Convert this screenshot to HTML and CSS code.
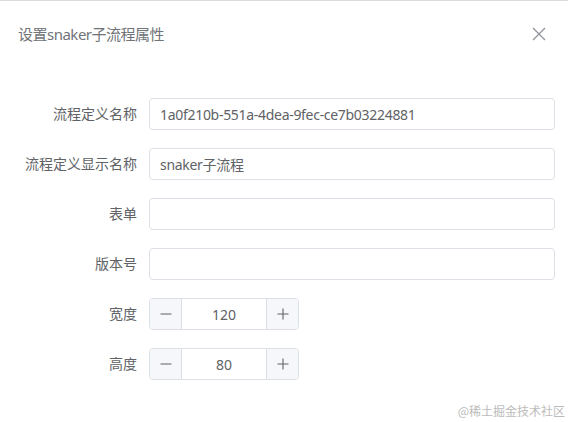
FILE: index.html
```html
<!DOCTYPE html>
<html lang="zh-CN">
  <head>
    <meta charset="UTF-8" />
    <meta name="viewport" content="width=device-width, initial-scale=1.0" />
    <title>设置snaker子流程属性</title>
    <link rel="stylesheet" href="styles.css">
  </head>
  <body>
    <div class="dialog">
      <!-- header -->
      <div class="dialog-header">
        <span class="dialog-title">设置snaker子流程属性</span>
        <button class="dialog-close" aria-label="关闭">
          <svg viewBox="0 0 14 14" width="14" height="14">
            <path d="M1 1 L13 13 M13 1 L1 13" stroke="#909399" stroke-width="1.3" fill="none" />
          </svg>
        </button>
      </div>

      <!-- form -->
      <form class="dialog-body">
        <div class="form-item">
          <label class="form-label">流程定义名称</label>
          <div class="form-content">
            <input class="input" type="text" value="1a0f210b-551a-4dea-9fec-ce7b03224881" />
          </div>
        </div>
        <div class="form-item">
          <label class="form-label">流程定义显示名称</label>
          <div class="form-content">
            <input class="input" type="text" value="snaker子流程" />
          </div>
        </div>
        <div class="form-item">
          <label class="form-label">表单</label>
          <div class="form-content">
            <input class="input" type="text" value="" />
          </div>
        </div>
        <div class="form-item">
          <label class="form-label">版本号</label>
          <div class="form-content">
            <input class="input" type="text" value="" />
          </div>
        </div>
        <div class="form-item">
          <label class="form-label">宽度</label>
          <div class="form-content">
            <div class="input-number">
              <span class="num-btn num-decrease">
                <svg viewBox="0 0 14 14" width="14" height="14"><path d="M1.5 7 H12.5" stroke="#606266" stroke-width="1.1" /></svg>
              </span>
              <input class="num-value" type="text" value="120" />
              <span class="num-btn num-increase">
                <svg viewBox="0 0 14 14" width="14" height="14"><path d="M1.5 7 H12.5 M7 1.5 V12.5" stroke="#606266" stroke-width="1.1" /></svg>
              </span>
            </div>
          </div>
        </div>
        <div class="form-item">
          <label class="form-label">高度</label>
          <div class="form-content">
            <div class="input-number">
              <span class="num-btn num-decrease">
                <svg viewBox="0 0 14 14" width="14" height="14"><path d="M1.5 7 H12.5" stroke="#606266" stroke-width="1.1" /></svg>
              </span>
              <input class="num-value" type="text" value="80" />
              <span class="num-btn num-increase">
                <svg viewBox="0 0 14 14" width="14" height="14"><path d="M1.5 7 H12.5 M7 1.5 V12.5" stroke="#606266" stroke-width="1.1" /></svg>
              </span>
            </div>
          </div>
        </div>
      </form>

      <div class="watermark">@稀土掘金技术社区</div>
    </div>
  </body>
</html>
```

FILE: styles.css
```css
* {
  box-sizing: border-box;
}
body {
  margin: 0;
  background-color: #fff;
  font-family: 'Noto Sans', 'Noto Sans CJK SC', sans-serif;
  color: #606266;
}
.dialog {
  position: relative;
  height: 422px;
  border-top: 1px solid #dcdcdc;
  background-color: #fff;
}
.dialog-header {
  display: flex;
  align-items: center;
  justify-content: space-between;
  padding: 21px 22px 10px 18px;
}
.dialog-title {
  font-size: 15px;
  line-height: 24px;
  letter-spacing: -0.5px;
  color: #707378;
}
.dialog-close {
  display: flex;
  padding: 0;
  border: none;
  background: none;
  cursor: pointer;
}
.dialog-body {
  margin: 0;
  padding: 42px 13px 0 0;
}
.form-item {
  display: flex;
  align-items: center;
  margin-bottom: 18px;
}
.form-label {
  width: 149px;
  flex-shrink: 0;
  padding-right: 12px;
  text-align: right;
  font-size: 14px;
  line-height: 32px;
  color: #606266;
}
.form-content {
  flex: 1;
}
.input {
  display: block;
  width: 100%;
  height: 32px;
  padding: 0 10px;
  border: 1px solid #dcdfe6;
  border-radius: 4px;
  font-family: inherit;
  font-size: 14px;
  letter-spacing: -0.3px;
  color: #606266;
  outline: none;
}
.input-number {
  display: flex;
  width: 150px;
  height: 32px;
  border: 1px solid #dcdfe6;
  border-radius: 4px;
  overflow: hidden;
}
.num-btn {
  display: flex;
  align-items: center;
  justify-content: center;
  width: 32px;
  flex-shrink: 0;
  background-color: #f5f7fa;
}
.num-decrease {
  border-right: 1px solid #dcdfe6;
}
.num-increase {
  border-left: 1px solid #dcdfe6;
}
.num-value {
  flex: 1;
  min-width: 0;
  border: none;
  padding: 0;
  text-align: center;
  font-family: inherit;
  font-size: 14px;
  color: #606266;
  outline: none;
}
.watermark {
  position: absolute;
  right: 3px;
  bottom: 3px;
  font-size: 12px;
  color: #bbbbbb;
  font-family: 'Noto Sans CJK SC', sans-serif;
}
```
